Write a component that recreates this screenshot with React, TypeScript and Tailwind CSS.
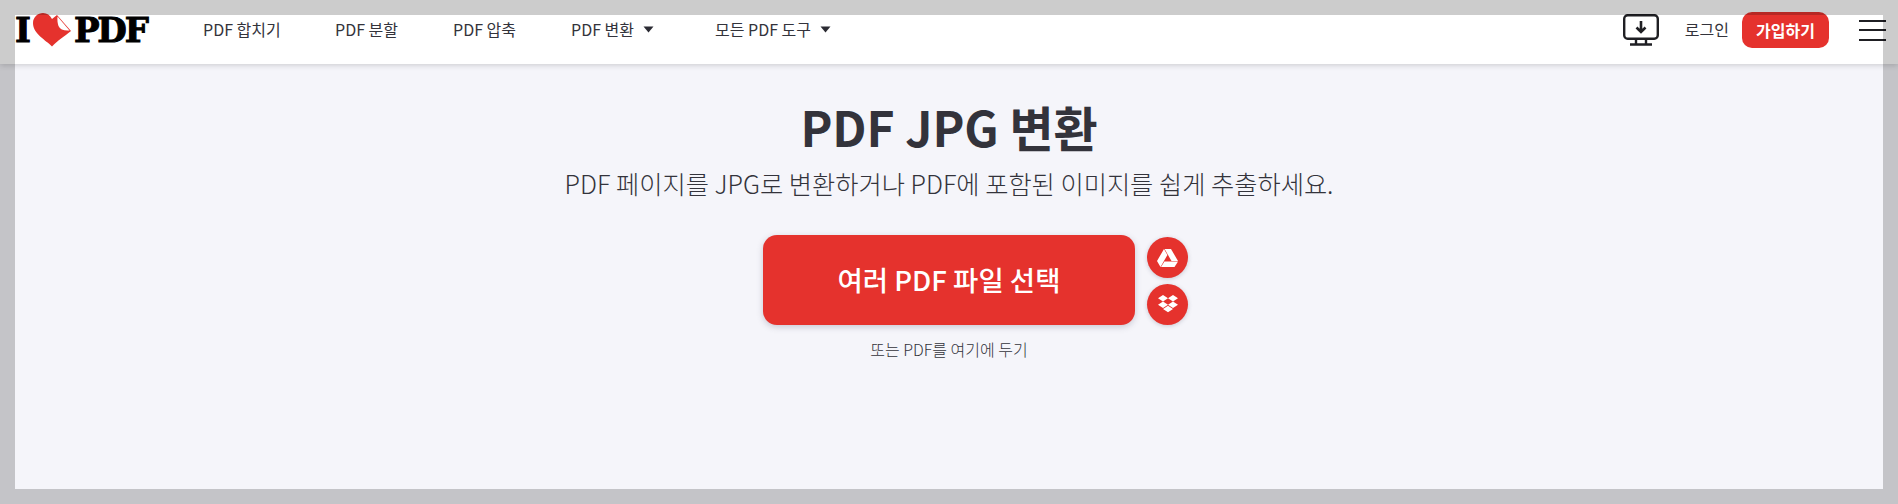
import React from "react";

const font = { fontFamily: '"Noto Sans CJK KR", "Noto Sans", sans-serif' };

function Caret() {
  return (
    <svg width="11" height="7" viewBox="0 0 11 7" className="ml-[9px] mt-[1px]">
      <path d="M0.5 0.5h10L5.5 6.5z" fill="#2b2b33" />
    </svg>
  );
}

function Logo() {
  return (
    <div className="flex h-[36px] w-[150px] items-center select-none">
      <span className="w-[18px] text-[34px] font-bold leading-none text-black [font-family:'DejaVu_Serif',serif] [-webkit-text-stroke:1px_black]">I</span>
      <svg width="38" height="34" viewBox="0 0 38 34" className="mr-[3px] shrink-0">
        <path d="M19 33.500 C13 27 0 21 0 10 C0 4 5 0 10 0 C14 0 17 2 19 6 L24 2 L38 18 C31 24 25 27 19 33.500Z" fill="#e5322d" />
        <path d="M24.500 3.500 L36.500 17.500 C31 18 27 16.500 25.500 13 C24.500 10 24.200 7 24.500 3.500Z" fill="#fff" />
      </svg>
      <span className="text-[34px] font-bold leading-none tracking-[-2.2px] text-black [font-family:'DejaVu_Serif',serif] [-webkit-text-stroke:1px_black]">PDF</span>
    </div>
  );
}

function DesktopIcon() {
  return (
    <svg width="36" height="32" viewBox="0 0 36 32" fill="none" stroke="#1f1f23" strokeWidth="2.400" className="shrink-0">
      <rect x="1.200" y="1.200" width="33.600" height="23.600" rx="3.500" />
      <path d="M13 25v5M23 25v5M7 30.500h22" />
      <path d="M18 7v11M13.500 13.500 18 18l4.500-4.500" strokeWidth="2.600" />
    </svg>
  );
}

export default function App() {
  return (
    <div style={font} className="relative flex h-[504px] w-full flex-col overflow-hidden bg-[#f5f5fa]">
      <header className="relative z-10 h-[64px] shrink-0 bg-white pl-[15px] pr-[12px] pt-[12px] [box-shadow:0_1px_6px_rgba(0,0,0,0.18)]">
        <div className="flex h-[36px] items-center text-[16px] text-[#33333b]">
          <Logo />
          <nav className="mb-[2px] ml-[38px] flex items-center">
            <a className="w-[132px] whitespace-nowrap">PDF 합치기</a>
            <a className="w-[118px] whitespace-nowrap">PDF 분할</a>
            <a className="w-[118px] whitespace-nowrap">PDF 압축</a>
            <a className="flex w-[144px] items-center whitespace-nowrap">PDF 변환<Caret /></a>
            <a className="flex items-center whitespace-nowrap">모든 PDF 도구<Caret /></a>
          </nav>
          <div className="ml-auto flex items-center">
            <DesktopIcon />
            <span className="mb-[2px] ml-[26px] whitespace-nowrap">로그인</span>
            <button className="ml-[13px] flex h-[36px] w-[87px] items-center justify-center rounded-[10px] bg-[#e5322d] text-[16px] font-bold text-white">가입하기</button>
            <div className="ml-[30px] flex w-[27px] flex-col gap-[7.5px]">
              <i className="h-[2px] bg-[#1f1f23]" />
              <i className="h-[2px] bg-[#1f1f23]" />
              <i className="h-[2px] bg-[#1f1f23]" />
            </div>
          </div>
        </div>
      </header>
      <main className="flex flex-1 flex-col items-center text-[#33333b]">
        <h1 className="mt-[33px] text-[48px] font-semibold leading-[58px] tracking-[-0.1px]">PDF JPG 변환</h1>
        <p className="mt-[10px] text-[25.25px] font-light leading-[36px]">PDF 페이지를 JPG로 변환하거나 PDF에 포함된 이미지를 쉽게 추출하세요.</p>
        <div className="ml-[53px] mt-[34px] flex items-start">
          <button className="flex h-[90px] w-[372px] items-center justify-center rounded-[14px] bg-[#e5322d] text-[27.5px] font-medium text-white [box-shadow:0_2px_6px_rgba(72,72,100,0.25)]">여러 PDF 파일 선택</button>
          <div className="ml-[12px] flex flex-col gap-[6px] pt-[2px]">
            <span className="flex h-[41px] w-[41px] items-center justify-center rounded-full bg-[#e5322d] [box-shadow:0_1px_4px_rgba(72,72,100,0.25)]">
              <svg width="21" height="18" viewBox="0 0 21 18" fill="#fff">
                <path d="M7 0 0 12l3.500 6L10.400 6 7.400 0.800z" />
                <path d="M7.600 0H14l7 12h-6.500z" />
                <path d="M7.400 12.500H21L17.500 18H4z" />
              </svg>
            </span>
            <span className="flex h-[41px] w-[41px] items-center justify-center rounded-full bg-[#e5322d] [box-shadow:0_1px_4px_rgba(72,72,100,0.25)]">
              <svg width="20" height="19" viewBox="0 0 20 19" fill="#fff">
                <path d="M5 0 0 3.300l5 3.200 5-3.200zM15 0l-5 3.300 5 3.200 5-3.200zM0 9.800 5 13l5-3.200-5-3.300zM15 6.500l-5 3.300 5 3.200 5-3.200zM5 14l5 3.300 5-3.300-5-3.200z" />
              </svg>
            </span>
          </div>
        </div>
        <p className="mt-[14px] text-[16px] leading-[20px] font-light text-[#33333b]">또는 PDF를 여기에 두기</p>
      </main>
      <div className="pointer-events-none absolute inset-0 z-20 border-[15px] border-black/20" />
    </div>
  );
}
